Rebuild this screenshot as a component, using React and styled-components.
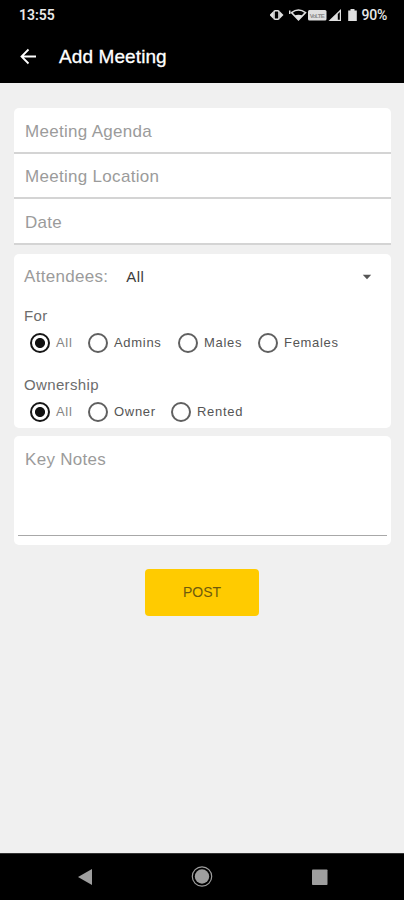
import React, { useState } from 'react';
import styled, { createGlobalStyle } from 'styled-components';

const GlobalStyle = createGlobalStyle`
  * {
    box-sizing: border-box;
  }

  body {
    margin: 0;
    background-color: #f0f0f0;
    font-family: "Liberation Sans", Arial, sans-serif;
  }
`;

const Container = styled.div`
  height: 900px;
  display: flex;
  flex-direction: column;
  background-color: #f0f0f0;
`;

const Header = styled.header`
  height: 83px;
  background-color: black;
  color: white;
`;

const StatusBar = styled.div`
  height: 30px;
  padding: 0 17px 0 19px;
  display: flex;
  align-items: center;
  justify-content: space-between;
`;

const Time = styled.span`
  font-family: Roboto, sans-serif;
  font-size: 14px;
  font-weight: 600;
  line-height: 32px;
  color: #e8e8e8;
`;

const StatusIcons = styled.div`
  display: flex;
  align-items: center;
`;

const Battery = styled.span`
  margin-left: 3px;
  font-family: Roboto, sans-serif;
  font-size: 14px;
  font-weight: 500;
  line-height: 32px;
  letter-spacing: -0.2px;
  color: #e8e8e8;
`;

const TitleBar = styled.div`
  height: 53px;
  padding-left: 20px;
  display: flex;
  align-items: center;
`;

const BackButton = styled.button`
  width: 17px;
  height: 17px;
  padding: 0;
  display: flex;
  border: none;
  background: none;
  color: white;
  cursor: pointer;
`;

const Title = styled.h1`
  margin: 0 0 0 22px;
  font-size: 19px;
  font-weight: 400;
  line-height: 24px;
  letter-spacing: 0.1px;
  -webkit-text-stroke: 0.3px white;
`;

const Form = styled.form`
  flex: 1;
  padding: 25px 13px 0 14px;
  display: flex;
  flex-direction: column;
`;

const Card = styled.section`
  height: ${props => props.$height}px;
  margin-bottom: ${props => props.$gap}px;
  padding: ${props => props.$padding || '0'};
  border-radius: ${props => props.$radius || '5px'};
  background-color: white;
`;

const Field = styled.div`
  height: ${props => props.$height}px;
  padding: 3px 0 0 11px;
  display: flex;
  align-items: center;
  border-bottom: 2px solid #d4d4d4;
`;

const Hint = styled.span`
  font-size: 17px;
  line-height: 22px;
  letter-spacing: 0.3px;
  color: #9b9b9b;
`;

const SelectRow = styled.div`
  height: 46px;
  padding: 0 19px 0 0;
  display: flex;
  align-items: center;
`;

const SelectValue = styled.span`
  flex: 1;
  margin-left: 18px;
  font-size: 15px;
  line-height: 22px;
  letter-spacing: 0.4px;
  color: #3c3c3c;
`;

const GroupTitle = styled.div`
  height: 20px;
  margin-top: ${props => props.$top}px;
  font-size: 15px;
  line-height: 20px;
  letter-spacing: 0.35px;
  color: #6c6c6c;
`;

const RadioRow = styled.div`
  margin-left: 6px;
  height: 33px;
  display: flex;
  align-items: center;
`;

const Option = styled.label`
  width: ${props => props.$width}px;
  display: flex;
  align-items: center;
  font-size: 13px;
  line-height: 20px;
  letter-spacing: 0.7px;
  color: ${props => (props.$soft ? '#858585' : '#555')};
  white-space: nowrap;
  cursor: pointer;
`;

const Radio = styled.input`
  appearance: none;
  flex: none;
  width: 20px;
  height: 20px;
  margin: 0 6px 0 0;
  border: 2px solid #606060;
  border-radius: 50%;

  &:checked {
    border-color: #161616;
    background: radial-gradient(circle, #111 4.6px, transparent 5.4px);
  }
`;

const Notes = styled.div`
  height: 100px;
  padding: 13px 0 0 7px;
  border-bottom: 1px solid #a8a8a8;
`;

const PostButton = styled.button`
  align-self: center;
  width: 114px;
  height: 47px;
  margin-right: 1px;
  padding: 0 0 2px;
  border: none;
  border-radius: 4px;
  background-color: #ffcb00;
  color: #6e5a0c;
  font-family: inherit;
  font-size: 14px;
  cursor: pointer;
`;

const NavBar = styled.nav`
  height: 47px;
  padding: 0 76px 0 77px;
  display: flex;
  align-items: center;
  justify-content: space-between;
  border-top: 1px solid #333;
  background-color: black;
`;

const BackIcon = () => (
  <svg width="17" height="17" viewBox="0 0 17 17" fill="none" stroke="currentColor" strokeWidth="1.8">
    <path d="M16 8.5H1.8M8.500 1.500l-7 7 7 7" />
  </svg>
);

const SystemIcons = () => (
  <svg width="88" height="18" viewBox="0 0 88 18" fill="#e0e0e0">
    {/* vibrate */}
    <path d="M-.5 9l4-4v8zM13.500 9l-4-4v8z" />
    <rect x="4" y="4.8" width="5" height="8.4" rx="1.2" fill="black" stroke="#e0e0e0" strokeWidth="1.6" />
    {/* wifi */}
    <path d="M21.500 6.600q7-5.200 14 0l-7 7.200z" fill="none" stroke="#e0e0e0" strokeWidth="1.600" />
    <path d="M24.500 9.600q4-1.600 8 0l-4 4.600z" />
    <path d="M19 4.500h1.500v3.500h-1.500z" />
    {/* volte */}
    <rect x="38" y="4" width="18.500" height="10.500" rx="1.500" />
    <text x="47.200" y="11.500" textAnchor="middle" fontSize="6" fontWeight="700" textLength="15" fill="#8a8a8a">VoLTE</text>
    {/* signal */}
    <path d="M58.500 15L71 3v12z" />
    <path d="M67.800 8l2-2V13.800h-2z" fill="black" />
    {/* battery */}
    <path d="M80.500 3h4v1.600h2.300V15h-8.600V4.600h2.300z" />
  </svg>
);

const ArrowDown = () => (
  <svg width="10" height="6" viewBox="0 0 10 6">
    <path d="M.8.800h8.400L5 5.200z" fill="#555" />
  </svg>
);

const forOptions = [
  { name: 'All', width: 58, soft: true },
  { name: 'Admins', width: 90 },
  { name: 'Males', width: 80 },
  { name: 'Females', width: 90 },
];

const ownershipOptions = [
  { name: 'All', width: 58, soft: true },
  { name: 'Owner', width: 83 },
  { name: 'Rented', width: 90 },
];

const RadioGroup = ({ name, options, value, onChange }) => (
  <RadioRow>
    {options.map(option => (
      <Option key={option.name} $width={option.width} $soft={option.soft}>
        <Radio
          type="radio"
          name={name}
          checked={value === option.name}
          onChange={() => onChange(option.name)}
        />
        {option.name}
      </Option>
    ))}
  </RadioRow>
);

const App = () => {
  const [audience, setAudience] = useState('All');
  const [ownership, setOwnership] = useState('All');

  const handleSubmit = (e) => {
    e.preventDefault();
  };

  return (
    <Container>
      <GlobalStyle />
      <Header>
        <StatusBar>
          <Time>13:55</Time>
          <StatusIcons>
            <SystemIcons />
            <Battery>90%</Battery>
          </StatusIcons>
        </StatusBar>
        <TitleBar>
          <BackButton aria-label="Back"><BackIcon /></BackButton>
          <Title>Add Meeting</Title>
        </TitleBar>
      </Header>

      <Form onSubmit={handleSubmit}>
        <Card $height={137} $gap={9} $radius="5px 5px 0 0">
          <Field $height={46}><Hint>Meeting Agenda</Hint></Field>
          <Field $height={45}><Hint>Meeting Location</Hint></Field>
          <Field $height={46}><Hint>Date</Hint></Field>
        </Card>

        <Card $height={174} $gap={8} $padding="0 0 0 10px">
          <SelectRow>
            <Hint>Attendees:</Hint>
            <SelectValue>All</SelectValue>
            <ArrowDown />
          </SelectRow>
          <GroupTitle $top={6}>For</GroupTitle>
          <RadioGroup name="for" options={forOptions} value={audience} onChange={setAudience} />
          <GroupTitle $top={16}>Ownership</GroupTitle>
          <RadioGroup name="ownership" options={ownershipOptions} value={ownership} onChange={setOwnership} />
        </Card>

        <Card $height={109} $gap={24} $padding="0 4px">
          <Notes><Hint>Key Notes</Hint></Notes>
        </Card>

        <PostButton type="submit">POST</PostButton>
      </Form>

      <NavBar>
        <svg width="16" height="18" viewBox="0 0 16 18">
          <path d="M15 1v16L1 9z" fill="#9e9e9e" />
        </svg>
        <svg width="22" height="22" viewBox="0 0 22 22">
          <circle cx="11" cy="10.500" r="9.700" fill="none" stroke="#9e9e9e" strokeWidth="1.200" />
          <circle cx="11" cy="10.500" r="7.200" fill="#9e9e9e" />
        </svg>
        <svg width="17" height="17" viewBox="0 0 17 17">
          <rect x="1" y=".5" width="15.500" height="15.500" rx=".8" fill="#9e9e9e" />
        </svg>
      </NavBar>
    </Container>
  );
};

export default App;
